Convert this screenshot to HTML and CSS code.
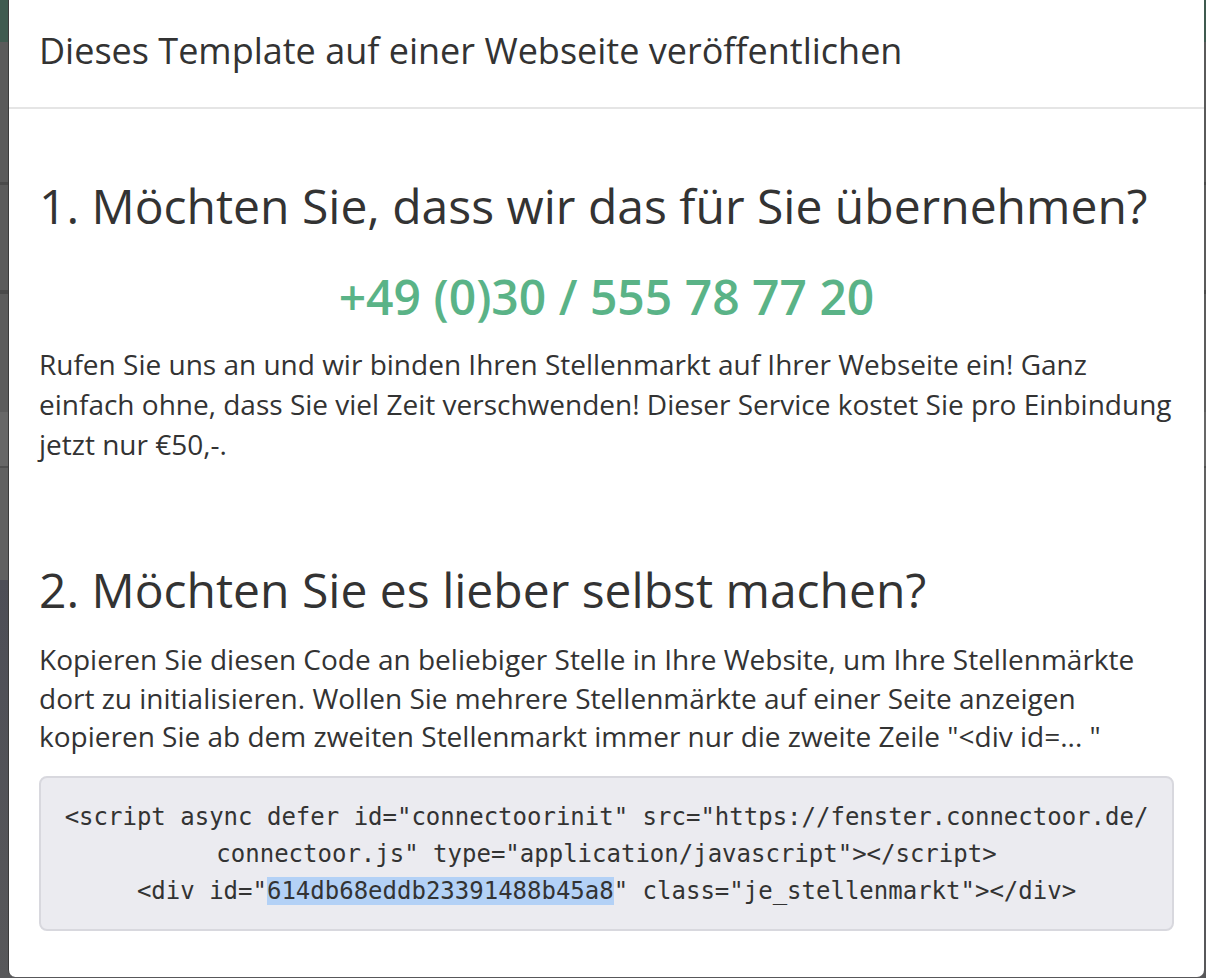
FILE: index.html
```html
<!DOCTYPE html>
<html lang="de">
<head>
    <meta charset="UTF-8">
    <meta name="viewport" content="width=device-width, initial-scale=1.0">
    <title>Template veröffentlichen</title>
    <link rel="stylesheet" href="styles.css">
</head>
<body>
    <div class="modal">
        <div class="modal-header">
            <h4 class="modal-title">Dieses Template auf einer Webseite veröffentlichen</h4>
        </div>
        <div class="modal-body">
            <h3 class="step">1. Möchten Sie, dass wir das für Sie übernehmen?</h3>
            <div class="phone">+49 (0)30 / 555 78 77 20</div>
            <p>Rufen Sie uns an und wir binden Ihren Stellenmarkt auf Ihrer Webseite ein! Ganz einfach ohne, dass Sie viel Zeit verschwenden! Dieser Service kostet Sie pro Einbindung jetzt nur €50,-.</p>

            <h3 class="step step-two">2. Möchten Sie es lieber selbst machen?</h3>
            <p>Kopieren Sie diesen Code an beliebiger Stelle in Ihre Website, um Ihre Stellenmärkte dort zu initialisieren. Wollen Sie mehrere Stellenmärkte auf einer Seite anzeigen kopieren Sie ab dem zweiten Stellenmarkt immer nur die zweite Zeile "&lt;div id=... "</p>
            <pre class="snippet"><span class="line">&lt;script async defer id="connectoorinit" src="https://fenster.connectoor.de/</span>
<span class="line">connectoor.js" type="application/javascript"&gt;&lt;/script&gt;</span>
<span class="line">&lt;div id="<span class="selected">614db68eddb23391488b45a8</span>" class="je_stellenmarkt"&gt;&lt;/div&gt;</span></pre>
        </div>
    </div>
</body>
</html>
```

FILE: styles.css
```css
html, body {
    margin: 0;
    height: 100%;
}

body {
    font-family: 'Open Sans', 'Liberation Sans', sans-serif;
    color: #333;
    overflow: hidden;
    /* abgedunkelte Seite hinter dem Dialog */
    background: linear-gradient(to bottom,
        #3f5a4f 0, #3f5a4f 42px,
        #5a5a5a 42px, #5a5a5a 182px,
        #4a4a4a 182px, #4a4a4a 185px,
        #5b5b5b 185px, #5b5b5b 290px,
        #4a4a4a 290px, #4a4a4a 294px,
        #5c5c5c 294px, #5c5c5c 412px,
        #676767 412px, #676767 466px,
        #505050 466px, #505050 468px,
        #616161 468px, #616161 580px,
        #4d4e56 580px, #58585a 978px);
    display: flex;
    padding: 0 2px 0 8px;
    box-sizing: border-box;
}

.modal {
    flex: 1;
    background: #fff;
    border-left: 1px solid #3a3a3a;
    border-radius: 0 0 7px 7px;
    margin-bottom: 1px;
}

.modal-header {
    padding: 25px 30px 31px;
    border-bottom: 2px solid #e5e5e5;
}

.modal-title {
    margin: 0;
    font-size: 36px;
    font-weight: 400;
    line-height: 51px;
}

.modal-body {
    padding: 30px 30px 0;
}

.step {
    margin: 40px 0 0;
    font-size: 48px;
    font-weight: 400;
    line-height: 53px;
}

.step-two {
    margin-top: 99px;
}

.phone {
    margin-top: 33px;
    text-align: center;
    font-size: 48px;
    font-weight: 600;
    line-height: 64px;
    color: #5ab387;
}

p {
    margin: 15px 0 0;
    font-size: 28px;
    line-height: 40px;
}

.step-two + p {
    margin-top: 24px;
    line-height: 38.5px;
}

.snippet {
    margin: 20px 0 0;
    padding: 21px 14px 19px;
    background: #ebebf0;
    border: 2px solid #d8d8de;
    border-radius: 8px;
    font-family: 'DejaVu Sans Mono', 'Liberation Mono', monospace;
    font-size: 24px;
    line-height: 37px;
    color: #333;
    text-align: center;
    white-space: normal;
}

.snippet .line {
    display: block;
    white-space: pre;
}

.selected {
    background: #b3d1f6;
}
```
